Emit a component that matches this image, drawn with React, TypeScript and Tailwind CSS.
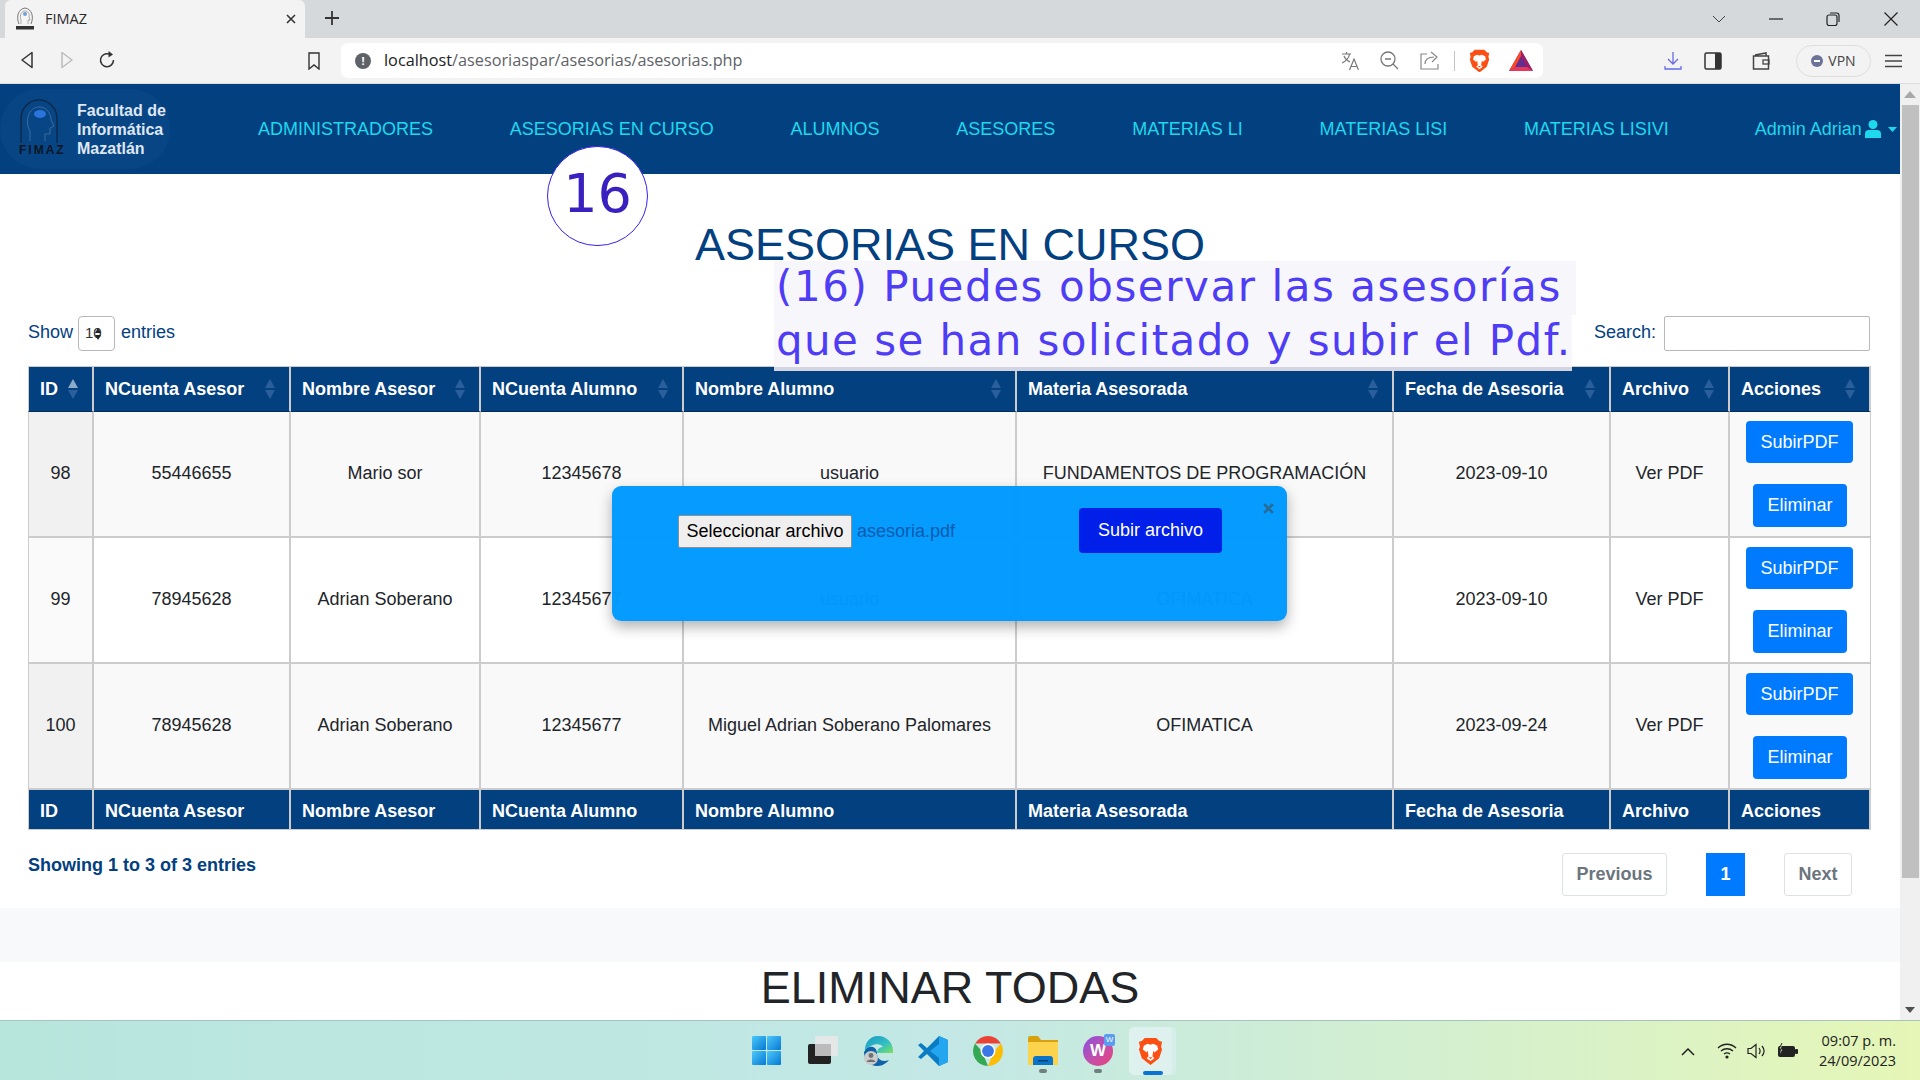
import React from "react";

const headers = ["ID", "NCuenta Asesor", "Nombre Asesor", "NCuenta Alumno", "Nombre Alumno", "Materia Asesorada", "Fecha de Asesoria", "Archivo", "Acciones"];
const widths = [66, 197, 190, 203, 333, 377, 217, 119, 141];
const rows = [
  ["98", "55446655", "Mario sor", "12345678", "usuario", "FUNDAMENTOS DE PROGRAMACIÓN", "2023-09-10"],
  ["99", "78945628", "Adrian Soberano", "12345677", "usuario", "OFIMATICA", "2023-09-10"],
  ["100", "78945628", "Adrian Soberano", "12345677", "Miguel Adrian Soberano Palomares", "OFIMATICA", "2023-09-24"],
];
const navItems = ["ADMINISTRADORES", "ASESORIAS EN CURSO", "ALUMNOS", "ASESORES", "MATERIAS LI", "MATERIAS LISI", "MATERIAS LISIVI"];

function SortArrows({ active }: { active?: boolean }) {
  return (
    <svg width="10" height="20" viewBox="0 0 10 20" className="shrink-0">
      <path d="M5 0 L10 9 L0 9 Z" fill={active ? "#8fa9c8" : "#2b5f9b"} />
      <path d="M5 20 L10 11 L0 11 Z" fill="#2b5f9b" />
    </svg>
  );
}

function Lion({ size = 26 }: { size?: number }) {
  return (
    <svg width={size} height={size * 1.12} viewBox="0 0 26 29">
      <path d="M7 1 L19 1 L22 4 L25 5 L24 10 L25 13 L22 22 L13 29 L4 22 L1 13 L2 10 L1 5 L4 4 Z" fill="#fb4f14" />
      <path d="M6 9 L10 7 L13 8 L16 7 L20 9 L21 13 L17 16 L16 14 L15 20 L17 22 L13 25 L9 22 L11 20 L10 14 L9 16 L5 13 Z" fill="#fff" />
      <path d="M11 21 L15 21 L13 23 Z" fill="#fb4f14" />
    </svg>
  );
}

function TaskIcons() {
  return (
    <div className="flex items-center w-[420px] h-full">
      <svg width="29" height="29" viewBox="0 0 29 29" className="ml-0">
        <defs>
          <linearGradient id="w1" x1="0" y1="0" x2="1" y2="1">
            <stop offset="0" stopColor="#4cc9fb" />
            <stop offset="1" stopColor="#0678d4" />
          </linearGradient>
        </defs>
        <rect x="0" y="0" width="14" height="14" rx="1" fill="url(#w1)" />
        <rect x="15" y="0" width="14" height="14" rx="1" fill="url(#w1)" />
        <rect x="0" y="15" width="14" height="14" rx="1" fill="url(#w1)" />
        <rect x="15" y="15" width="14" height="14" rx="1" fill="url(#w1)" />
      </svg>
      <svg width="30" height="29" viewBox="0 0 30 29" className="ml-[27px]">
        <rect x="0" y="8" width="23" height="20" rx="2" fill="#222" />
        <rect x="7" y="0" width="23" height="20" rx="2" fill="#e8e8e8" fillOpacity="0.9" />
        <rect x="7" y="8" width="16" height="12" fill="#bbb" />
      </svg>
      <svg width="30" height="30" viewBox="0 0 30 30" className="ml-[25px]">
        <defs>
          <linearGradient id="e1" x1="0" y1="0" x2="1" y2="1">
            <stop offset="0" stopColor="#1595c9" />
            <stop offset="0.6" stopColor="#35c1c1" />
            <stop offset="1" stopColor="#7fe05a" />
          </linearGradient>
        </defs>
        <path d="M15 0 C24 0 30 7 30 15 L30 17 L14 17 C14 13 17 11 20 11 C18 7 8 6 2 16 C1 7 7 0 15 0 Z" fill="url(#e1)" />
        <path d="M1 16 C5 9 13 9 14 17 C14 23 19 27 26 24 C22 29 17 30 14 30 C6 30 1 23 1 16 Z" fill="#0f62a8" />
        <circle cx="8" cy="22" r="7" fill="#c9cdcd" />
        <circle cx="8" cy="19.5" r="2.4" fill="#707070" />
        <path d="M3.5 26 C4 22.5 12 22.5 12.500 26 Z" fill="#707070" />
      </svg>
      <svg width="30" height="30" viewBox="0 0 30 30" className="ml-[25px]">
        <path d="M21 0 L30 4 L30 26 L21 30 L9 18 L3 23 L0 21 L6 15 L0 9 L3 7 L9 12 Z" fill="#0a7cc4" />
        <path d="M21 0 L30 4 L30 26 L21 30 Z M21 8 L12 15 L21 22 Z" fill="#23a6ef" fillRule="evenodd" />
      </svg>
      <svg width="30" height="30" viewBox="0 0 48 48" className="ml-[25px]">
        <path d="M4.95 13 A22 22 0 0 1 43.05 13 L24 13 Z" fill="#ea4335" transform="scale(1.09) translate(-2 -2)" />
        <path d="M43.05 13 A22 22 0 0 1 24 46 L33 24 Z" fill="#fbbc04" transform="scale(1.09) translate(-2 -2)" />
        <path d="M24 46 A22 22 0 0 1 4.95 13 L15 24 Z" fill="#34a853" transform="scale(1.09) translate(-2 -2)" />
        <circle cx="24" cy="24" r="12" fill="#fff" />
        <circle cx="24" cy="24" r="9.500" fill="#3b78e7" />
      </svg>
      <div className="relative ml-[25px] w-[30px] h-[30px]">
        <svg width="30" height="30" viewBox="0 0 30 30">
          <path d="M0 2 Q0 0 2 0 L10 0 L13 4 L30 4 L30 7 L0 7 Z" fill="#d9a20c" />
          <path d="M0 6 L30 6 L30 29 L0 29 Z" fill="#fcd34d" />
          <path d="M5 29 L5 23 Q5 20 8 20 L22 20 Q25 20 25 23 L25 29 Z" fill="#0a74c9" />
          <rect x="10" y="24" width="10" height="1.500" fill="#063e75" />
        </svg>
        <div className="absolute left-[11px] top-[33px] w-[8px] h-[4px] rounded-full bg-[#6f7f80]" />
      </div>
      <div className="relative ml-[25px] w-[30px] h-[30px]">
        <div className="w-[30px] h-[30px] rounded-full bg-gradient-to-br from-[#8a4be0] to-[#f03a78] flex items-center justify-center">
          <span className="text-white font-bold text-[17px] leading-none [font-family:'Liberation_Sans',sans-serif]">W</span>
        </div>
        <div className="absolute -right-[2px] -top-[2px] w-[11px] h-[12px] rounded-[2px] bg-[#5a9cf0] text-white text-[8px] leading-[12px] text-center [font-family:'Liberation_Sans',sans-serif]">W</div>
        <div className="absolute left-[11px] top-[33px] w-[8px] h-[4px] rounded-full bg-[#6f7f80]" />
      </div>
      <div className="relative ml-[16px] w-[43px] h-[48px] rounded-[5px] bg-[#dff1ef] flex items-center justify-center shadow-[4px_0_0_#d6eeea]">
        <Lion size={25} />
        <div className="absolute left-[14px] bottom-[0px] w-[20px] h-[4px] rounded-full bg-[#0a74d4]" />
      </div>
    </div>
  );
}

export default function App() {
  return (
    <div className="relative w-[1920px] h-[1080px] overflow-hidden flex flex-col bg-white [font-family:'Liberation_Sans',Arial,sans-serif] text-[18px] text-[#212529]">
      {/* Tab strip */}
      <div className="h-[38px] shrink-0 bg-[#d6d9db] flex items-end pl-[5px] [font-family:'Open_Sans',sans-serif]">
        <div className="w-[300px] h-[38px] bg-[#f3f3f3] rounded-t-[6px] flex items-center pl-[10px] pr-[5px]">
          <svg width="20" height="24" viewBox="0 0 20 24" className="shrink-0">
            <path d="M4 17 C1 10 3 2 10 1 C17 2 19 10 16 17" fill="none" stroke="#777" strokeWidth="1" />
            <path d="M6 17 V13 C4 8 7 4 10 4 C13 4 15 7 14 10 L15 13 H13 V17" fill="#f5f5f5" stroke="#999" strokeWidth="0.800" />
            <circle cx="10" cy="7" r="2" fill="#6f9fd8" />
            <rect x="1" y="19" width="18" height="3.500" fill="#333" />
          </svg>
          <span className="ml-[10px] text-[14.5px] text-[#2b2b2b]">FIMAZ</span>
          <svg width="12" height="12" viewBox="0 0 12 12" className="ml-auto mr-[3px]"><path d="M2 2 L10 10 M10 2 L2 10" stroke="#333" strokeWidth="1.600" /></svg>
        </div>
        <svg width="16" height="16" viewBox="0 0 16 16" className="ml-[19px] mb-[12px]"><path d="M8 1 V15 M1 8 H15" stroke="#333" strokeWidth="1.800" /></svg>
        <svg width="14" height="8" viewBox="0 0 14 8" className="ml-[1372px] mb-[15px]"><path d="M1 1 L7 7 L13 1" stroke="#444" strokeWidth="1" fill="none" /></svg>
        <svg width="14" height="2" viewBox="0 0 14 2" className="ml-[43px] mb-[18px]"><path d="M0 1 H14" stroke="#222" strokeWidth="1.200" /></svg>
        <svg width="14" height="14" viewBox="0 0 14 14" className="ml-[43px] mb-[12px]"><rect x="1" y="3" width="10" height="10.500" rx="2" fill="none" stroke="#222" strokeWidth="1.200" /><path d="M4 1 H10.500 Q13 1 13 3.500 V10" fill="none" stroke="#222" strokeWidth="1.200" /></svg>
        <svg width="14" height="14" viewBox="0 0 14 14" className="ml-[44px] mb-[12px]"><path d="M0.500 0.500 L13.500 13.500 M13.500 0.500 L0.500 13.500" stroke="#222" strokeWidth="1.200" /></svg>
      </div>

      {/* Toolbar */}
      <div className="h-[46px] shrink-0 bg-[#f3f3f3] border-b border-[#dcdcdc] flex items-center [font-family:'Open_Sans',sans-serif]">
        <svg width="14" height="18" viewBox="0 0 14 18" className="ml-[20px] -mt-[1px]"><path d="M12 1.500 L2 9 L12 16.500 Z" fill="none" stroke="#333" strokeWidth="1.500" strokeLinejoin="round" /></svg>
        <svg width="14" height="18" viewBox="0 0 14 18" className="ml-[26px] -mt-[1px]"><path d="M2 1.500 L12 9 L2 16.500 Z" fill="none" stroke="#bcbcbc" strokeWidth="1.500" strokeLinejoin="round" /></svg>
        <svg width="18" height="18" viewBox="0 0 18 18" className="ml-[24px] -mt-[1px]"><path d="M15.500 9 A6.500 6.500 0 1 1 11 3" fill="none" stroke="#333" strokeWidth="1.500" /><path d="M10.500 0 L15 3.500 L10.500 6.500 Z" fill="#333" /></svg>
        <svg width="12" height="18" viewBox="0 0 12 18" className="ml-[192px]"><path d="M1 1 H11 V17 L6 13 L1 17 Z" fill="none" stroke="#333" strokeWidth="1.400" /></svg>
        <div className="ml-[21px] w-[1202px] h-[35px] bg-white rounded-[7px] flex items-center pl-[14px] pr-[10px]">
          <div className="w-[16px] h-[16px] rounded-full bg-[#5f6368] text-white text-[11px] leading-[16px] text-center font-bold shrink-0">!</div>
          <span className="ml-[13px] text-[16.25px] text-[#5f6368] whitespace-nowrap"><span className="text-[#222]">localhost</span>/asesoriaspar/asesorias/asesorias.php</span>
          <svg width="18" height="20" viewBox="0 0 18 20" className="ml-auto shrink-0"><path d="M1 3 H10 M5.500 1 V3 M8.500 3 C8 7 5 10 1 12 M3 5 C4 8 7 10 9 11" stroke="#777" strokeWidth="1.200" fill="none" /><path d="M8.500 19 L13 8 L17.500 19 M10 15.500 H16" stroke="#777" strokeWidth="1.200" fill="none" /></svg>
          <svg width="19" height="19" viewBox="0 0 19 19" className="ml-[21px] shrink-0"><circle cx="8" cy="8" r="7" fill="none" stroke="#777" strokeWidth="1.300" /><path d="M5 8 H11 M13 13 L18 18" stroke="#777" strokeWidth="1.300" /></svg>
          <svg width="19" height="19" viewBox="0 0 19 19" className="ml-[21px] shrink-0"><path d="M7 3 H1 V18 H18 V13" fill="none" stroke="#888" strokeWidth="1.200" /><path d="M5 13 C5 8 9 6 14 6 M11 1 L17 6 L12 11" fill="none" stroke="#888" strokeWidth="1.200" /></svg>
          <div className="ml-[15px] w-px h-[20px] bg-[#c4c4c4] shrink-0" />
          <div className="ml-[14px] shrink-0 flex"><Lion size={21} /></div>
          <svg width="24" height="21" viewBox="0 0 24 21" className="ml-[19px] shrink-0"><path d="M12 0 L24 21 L0 21 Z" fill="#662d91" /><path d="M12 0 L24 21 L18 17 L12 6 Z" fill="#9e1f63" /><path d="M12 0 L12 6 L6 17 L0 21 Z" fill="#ff4724" /><path d="M0 21 L6 17 L18 17 L24 21 Z" fill="#e8375c" /></svg>
        </div>
        <svg width="18" height="20" viewBox="0 0 18 20" className="ml-[121px]"><path d="M9 1 V13 M4 8 L9 13 L14 8 M1 15 V18 H17 V15" fill="none" stroke="#6a6ae8" strokeWidth="1.300" /></svg>
        <svg width="18" height="18" viewBox="0 0 18 18" className="ml-[22px]"><rect x="1" y="1" width="16" height="16" rx="1.500" fill="none" stroke="#333" strokeWidth="1.500" /><rect x="11" y="1" width="6" height="16" fill="#333" /></svg>
        <svg width="18" height="18" viewBox="0 0 18 18" className="ml-[30px]"><path d="M3 3 L14 1 V4 M1.500 4 H16.500 V17 H1.500 Z" fill="none" stroke="#444" strokeWidth="1.500" /><rect x="11" y="8" width="6" height="4" fill="none" stroke="#444" strokeWidth="1.300" /></svg>
        <div className="ml-[26px] w-[75px] h-[32px] rounded-full border border-[#dedede] flex items-center justify-center gap-[5px] text-[14px] text-[#444]">
          <span className="w-[12px] h-[12px] rounded-full bg-[#6b7398] flex items-center justify-center"><span className="w-[6px] h-[2px] bg-white" /></span>
          VPN
        </div>
        <svg width="17" height="14" viewBox="0 0 17 14" className="ml-[14px]"><path d="M0 1.500 H17 M0 7 H17 M0 12.500 H17" stroke="#444" strokeWidth="1.600" /></svg>
      </div>

      {/* Page + scrollbar */}
      <div className="flex-1 min-h-0 flex">
        <main className="w-[1900px] shrink-0 overflow-hidden flex flex-col bg-white">
          <nav className="h-[90px] shrink-0 bg-[#03407f] flex items-center">
            <div className="relative w-[170px] h-[80px] rounded-[40px] bg-[#084585] shrink-0 flex items-center">
              <svg width="38" height="48" viewBox="0 0 38 48" className="ml-[20px] -mt-[12px] shrink-0">
                <path d="M1 44 V20 C1 9 9 1 19 1 C29 1 37 9 37 20 V44" fill="none" stroke="#0f2a4c" strokeWidth="1.500" />
                <path d="M10 42 V32 C4 22 9 8 19 8 C27 8 31 15 31 21 L34 27 L30 29 V35 H25 V42" fill="none" stroke="#3c6c9e" strokeWidth="1" />
                <ellipse cx="20" cy="15" rx="6" ry="4" fill="#2a74dc" />
              </svg>
              <span className="absolute left-[19px] top-[55px] text-[12px] leading-[12px] font-bold text-[#0b1626] tracking-[2px]">FIMAZ</span>
              <div className="ml-[19px] text-[16px] leading-[19px] font-bold text-[#dfe7f2] whitespace-nowrap">Facultad de<br />Informática<br />Mazatlán</div>
            </div>
            <div className="ml-[88px] flex items-center gap-[76.75px] text-[#1ed8ee] whitespace-nowrap">
              {navItems.map((n) => (<span key={n}>{n}</span>))}
            </div>
            <div className="ml-[86px] flex items-center text-[#1ed8ee] whitespace-nowrap">
              <span>Admin Adrian</span>
              <svg width="16" height="18" viewBox="0 0 16 18" className="ml-[3px]"><circle cx="8" cy="4.500" r="4.500" fill="#1ed8ee" /><path d="M0 18 V14 Q0 10 4 10 H12 Q16 10 16 14 V18 Z" fill="#1ed8ee" /></svg>
              <svg width="9" height="5" viewBox="0 0 9 5" className="ml-[7px]"><path d="M0 0 H9 L4.500 5 Z" fill="#1ed8ee" /></svg>
            </div>
          </nav>

          <h1 className="h-[142px] shrink-0 flex items-center justify-center text-[45px] font-normal text-[#03407f]">ASESORIAS EN CURSO</h1>

          <div className="h-[50px] shrink-0 pl-[28px] pr-[30px] flex items-start justify-between text-[#03407f]">
            <div className="flex items-center h-[35px]">
              <span className="pb-[2px]">Show</span>
              <div className="ml-[5px] w-[37px] h-[35px] rounded-[4px] border border-[#b8b8b8] flex items-center pl-[6px] text-[#333] text-[15px]">
                <span>10</span>
                <svg width="8" height="14" viewBox="0 0 8 14" className="-ml-[8px]"><path d="M4 1 L7 6 H1 Z M4 13 L7 8 H1 Z" fill="#222" /></svg>
              </div>
              <span className="ml-[6px] pb-[2px]">entries</span>
            </div>
            <div className="flex items-center h-[35px]">
              <span className="pb-[2px]">Search:</span>
              <div className="ml-[8px] w-[206px] h-[35px] border border-[#b8b8b8] rounded-[2px]" />
            </div>
          </div>

          <div className="px-[28px] shrink-0">
            <table className="w-[1843px] table-fixed border-separate border-spacing-0">
              <colgroup>
                {widths.map((w, i) => (<col key={i} style={{ width: w }} />))}
              </colgroup>
              <thead>
                <tr className="bg-[#03407f] text-white">
                  {headers.map((h, i) => (
                    <th key={h} className={`h-[46px] p-0 pl-[11px] font-bold text-left border-t border-t-[#ccc] border-b border-b-[#022d5a] border-r-2 border-r-[#ccc] ${i === 0 ? "border-l border-l-[#ccc]" : ""} ${i === 8 ? "border-r-0" : ""}`}>
                      <div className="flex items-center justify-between pr-[14px] whitespace-nowrap">
                        <span>{h}</span>
                        <SortArrows active={i === 0} />
                      </div>
                    </th>
                  ))}
                </tr>
              </thead>
              <tbody>
                {rows.map((r, ri) => (
                  <tr key={r[0]} className={ri % 2 === 0 ? "bg-[#f9f9f9]" : "bg-white"}>
                    {r.map((c, i) => (
                      <td key={i} className={`h-[126px] p-0 pb-[2px] text-center border-b-2 border-b-[#ccc] border-r-2 border-r-[#ccc] ${i === 0 ? `border-l border-l-[#ccc] ${ri % 2 === 0 ? "bg-[#f1f1f1]" : "bg-[#fafafa]"}` : ""}`}>{c}</td>
                    ))}
                    <td className="p-0 pb-[2px] text-center border-b-2 border-b-[#ccc] border-r-2 border-r-[#ccc]">Ver PDF</td>
                    <td className="p-0 border-b-2 border-b-[#ccc] border-r border-r-[#ccc]">
                      <div className="flex flex-col items-center gap-[21px]">
                        <button className="w-[107px] h-[42px] -ml-[1px] rounded-[4px] bg-[#007bff] text-white">SubirPDF</button>
                        <button className="w-[94px] h-[43px] rounded-[4px] bg-[#007bff] text-white">Eliminar</button>
                      </div>
                    </td>
                  </tr>
                ))}
              </tbody>
              <tfoot>
                <tr className="bg-[#03407f] text-white">
                  {headers.map((h, i) => (
                    <th key={h} className={`h-[40px] p-0 pl-[11px] pt-[3px] font-bold text-left whitespace-nowrap border-b border-b-[#ccc] border-r-2 border-r-[#ccc] ${i === 0 ? "border-l border-l-[#ccc]" : ""} ${i === 8 ? "border-r-0" : ""}`}>{h}</th>
                  ))}
                </tr>
              </tfoot>
            </table>
          </div>

          <div className="mt-[23px] h-[43px] shrink-0 px-[28px] flex items-start justify-between">
            <span className="mt-[1px] font-bold text-[#03407f] leading-[22px]">Showing 1 to 3 of 3 entries</span>
            <div className="flex items-center gap-[39px] pr-[20px] font-bold text-[#6c757d]">
              <div className="w-[105px] h-[43px] rounded-[3px] border border-[#dee2e6] flex items-center justify-center">Previous</div>
              <div className="w-[39px] h-[43px] bg-[#007bff] text-white flex items-center justify-center">1</div>
              <div className="w-[68px] h-[43px] rounded-[3px] border border-[#dee2e6] flex items-center justify-center">Next</div>
            </div>
          </div>

          <div className="mt-[12px] h-[54px] shrink-0 bg-[#f8f9fa]" />
          <h2 className="text-center text-[45px] leading-[52px] font-normal text-[#212529] whitespace-nowrap">ELIMINAR TODAS</h2>
        </main>

        <div className="w-[20px] shrink-0 bg-[#f0f0f0] flex flex-col items-center">
          <svg width="12" height="7" viewBox="0 0 12 7" className="mt-[7px]"><path d="M6 0 L12 7 H0 Z" fill="#a8a8a8" /></svg>
          <div className="mt-[7px] ml-[1px] w-[17px] h-[773px] bg-[#c0c0c0]" />
          <svg width="10" height="6" viewBox="0 0 10 6" className="mt-auto mb-[7px]"><path d="M0 0 H10 L5 6 Z" fill="#505050" /></svg>
        </div>
      </div>

      {/* Taskbar */}
      <div className="h-[60px] shrink-0 border-t border-[#a9c4bf] bg-gradient-to-r from-[#b7e6dd] via-[#c3e8e5] to-[#e5f6b6] flex items-center pl-[752px]">
        <TaskIcons />
        <svg width="14" height="8" viewBox="0 0 14 8" className="ml-[509px] mt-[2px]"><path d="M1 7 L7 1 L13 7" fill="none" stroke="#222" strokeWidth="1.500" /></svg>
        <svg width="20" height="16" viewBox="0 0 20 16" className="ml-[22px]"><path d="M1 5 C6 0 14 0 19 5 M4 8 C7.500 5 12.500 5 16 8 M7 11 C9 9.500 11 9.500 13 11" fill="none" stroke="#222" strokeWidth="1.300" /><circle cx="10" cy="14" r="1.600" fill="#222" /></svg>
        <svg width="20" height="16" viewBox="0 0 20 16" className="ml-[10px]"><path d="M1 5.500 H4 L9 1.500 V14.500 L4 10.500 H1 Z" fill="none" stroke="#222" strokeWidth="1.200" /><path d="M12 5 C13.500 7 13.500 9 12 11 M15 3 C17.500 6 17.500 10 15 13" fill="none" stroke="#222" strokeWidth="1.200" /></svg>
        <svg width="21" height="15" viewBox="0 0 21 15" className="ml-[10px]"><rect x="1" y="3" width="17" height="11" rx="2" fill="#222" /><rect x="18" y="6" width="3" height="5" rx="1" fill="#222" /><path d="M5 0 L2 6 H6 L3 12" fill="#d4efc8" stroke="#222" strokeWidth="1" /></svg>
        <div className="ml-auto pr-[24px] text-right text-[14.5px] leading-[20px] text-[#222] [font-family:'Open_Sans',sans-serif] whitespace-nowrap">09:07 p. m.<br />24/09/2023</div>
      </div>

      {/* Tutorial callout number */}
      <div className="absolute left-[547px] top-[146px] w-[101px] h-[100px] rounded-full bg-white border border-[#3a20f0] flex items-center justify-center pb-[6px] text-[54px] text-[#3a20bf] [font-family:'DejaVu_Sans',sans-serif]">16</div>

      {/* Tutorial callout text */}
      <div className="absolute left-[774px] top-[261px] w-[802px] text-[42px] leading-[52px] text-[#4f3df5] [font-family:'DejaVu_Sans',sans-serif] whitespace-nowrap">
        <div className="w-[802px] h-[54px] bg-[#f7f7fb] pl-[2px] tracking-[1.55px]">(16) Puedes observar las asesorías</div>
        <div className="w-[798px] h-[56px] bg-[#f7f7fb] border-b-4 border-[#d4d4e0] pl-[2px] tracking-[1.42px]">que se han solicitado y subir el Pdf.</div>
      </div>

      {/* Upload modal */}
      <div className="absolute left-[612px] top-[486px] w-[675px] h-[135px] rounded-[9px] bg-[#0099ff]/98 shadow-[0_6px_14px_rgba(0,0,0,0.3)] flex items-start pt-[23px] pl-[66px]">
        <div className="w-[401px] flex items-center h-[45px]">
          <button className="w-[174px] h-[33px] bg-[#efefef] border border-[#8f8f8f] rounded-[2px] text-black">Seleccionar archivo</button>
          <span className="ml-[5px] text-[#0b5cae]">asesoria.pdf</span>
        </div>
        <button className="w-[143px] h-[45px] -mt-[1px] rounded-[4px] bg-[#001fe8] text-white">Subir archivo</button>
        <svg width="11" height="11" viewBox="0 0 10 10" className="ml-[41px] -mt-[6px]"><path d="M1 1 L9 9 M9 1 L1 9" stroke="#2a6a96" strokeWidth="2.400" /></svg>
      </div>
    </div>
  );
}
